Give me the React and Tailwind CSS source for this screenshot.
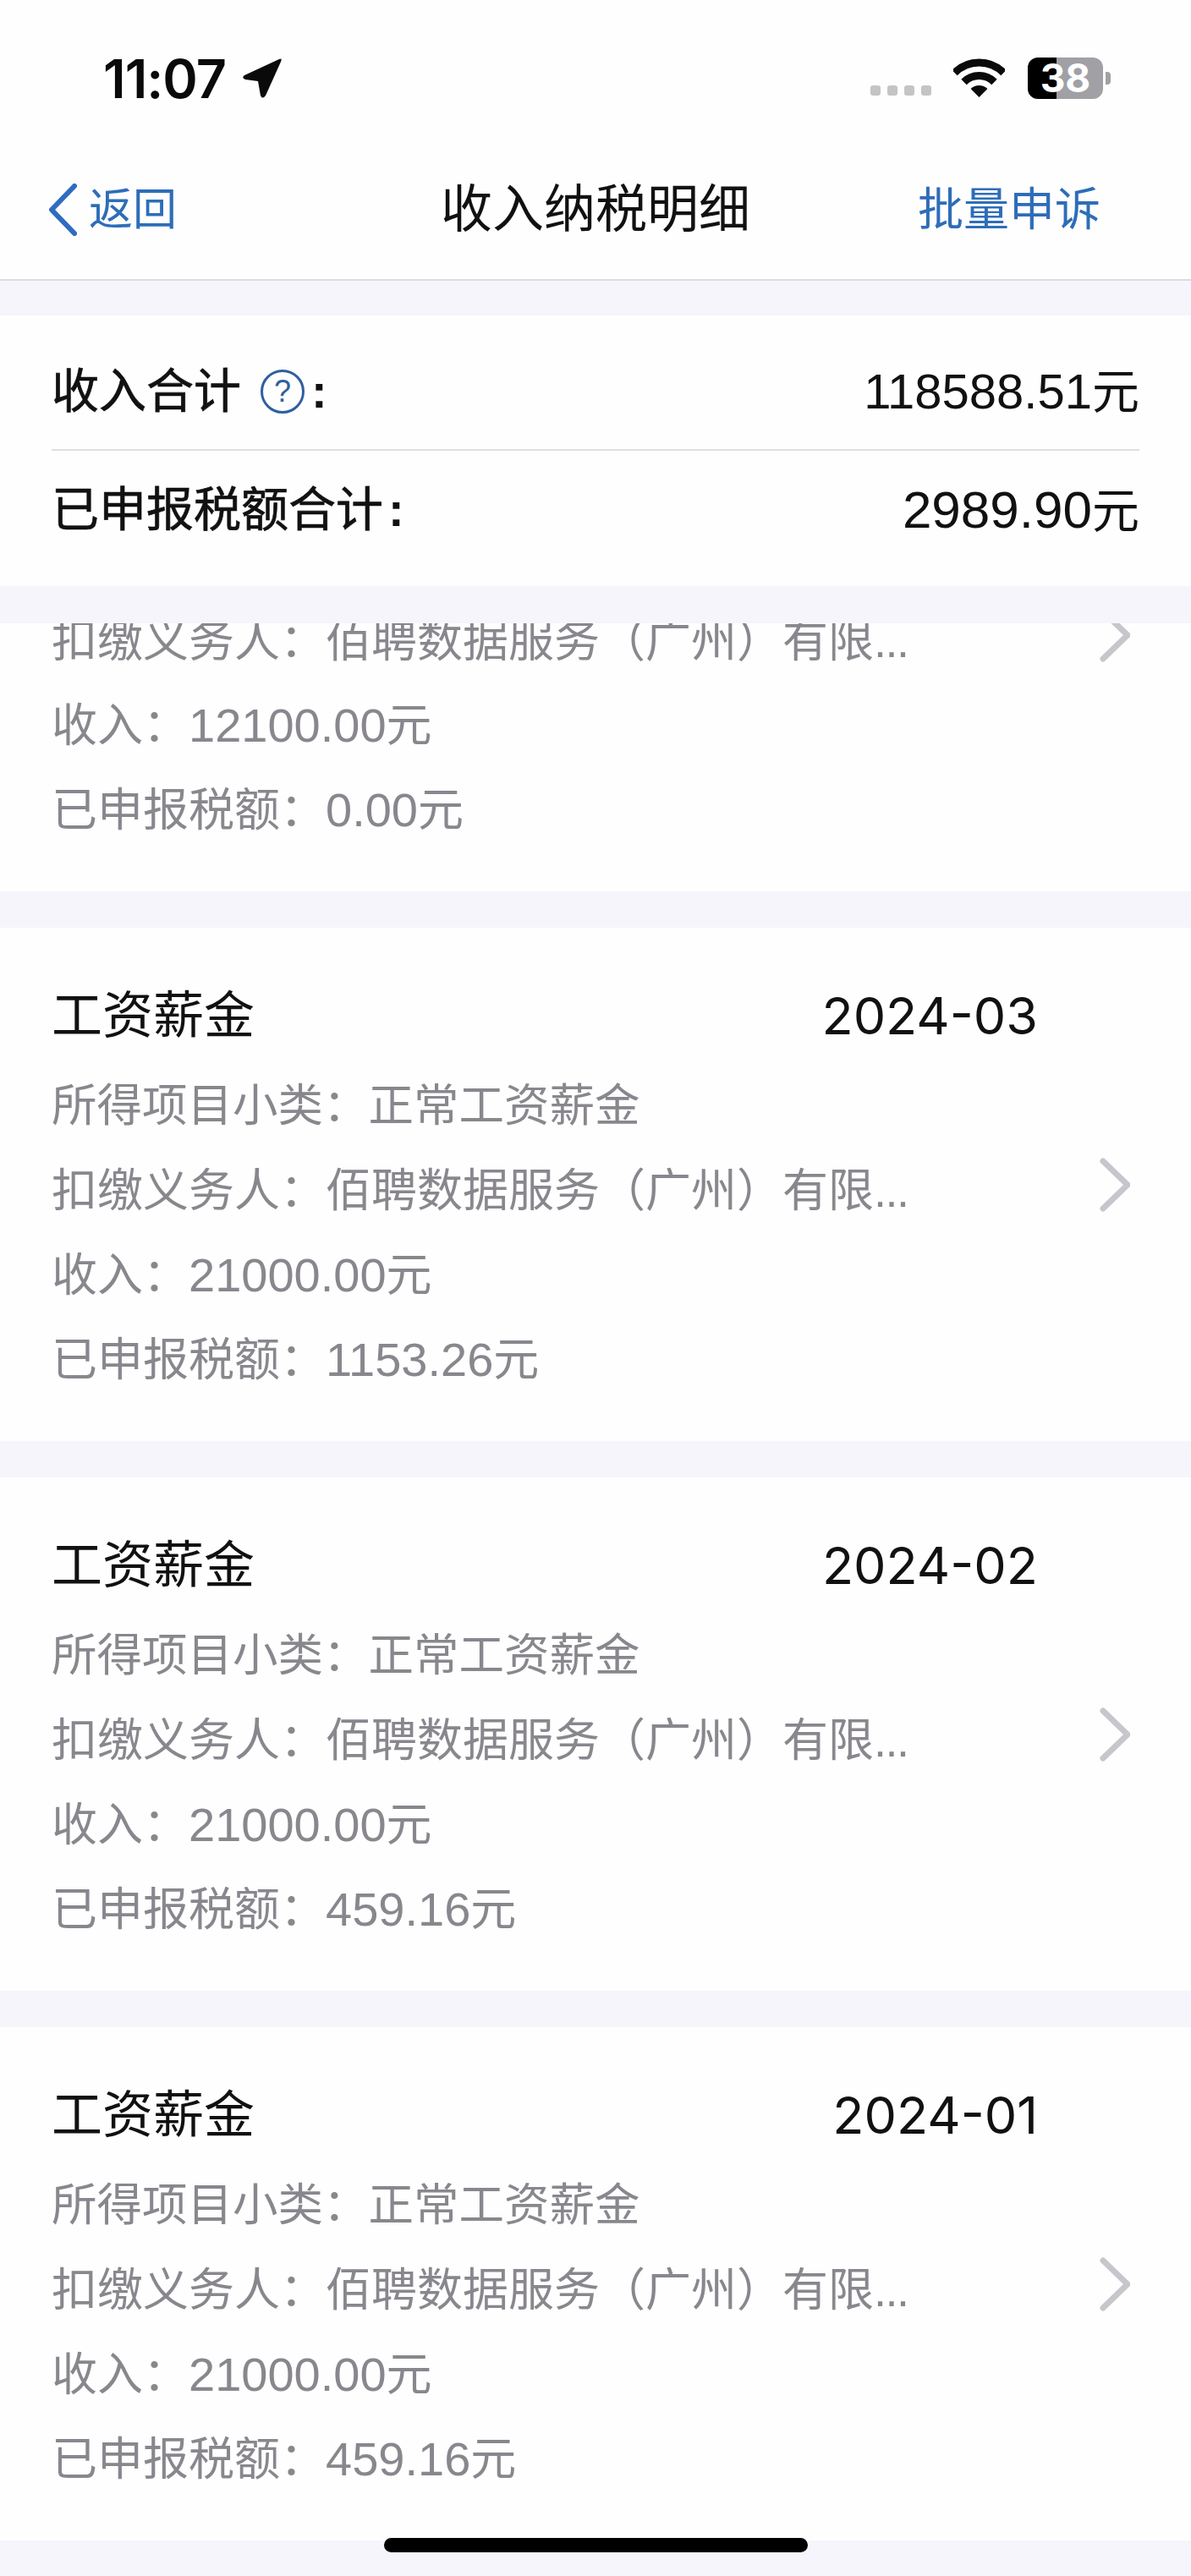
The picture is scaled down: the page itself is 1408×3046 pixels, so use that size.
const CARDS = [
  { date: '2024-04', income: '12100.00', tax: '0.00' },
  { date: '2024-03', income: '21000.00', tax: '1153.26' },
  { date: '2024-02', income: '21000.00', tax: '459.16' },
  { date: '2024-01', income: '21000.00', tax: '459.16' },
];

const StatusBar = () => (
  <div className="h-[184px] flex items-center justify-between pl-[122px] pr-[95px]">
    <div className="flex items-center gap-[18px] pt-[2px]">
      <span className="font-['Inter',sans-serif] text-[63px] leading-none font-semibold tracking-[-1px] text-[#0a0a0a]">11:07</span>
      <svg width="48" height="48" viewBox="0 0 48 48" className="-mt-[2px]">
        <path d="M45 2 4 21q-4 3 1 5l15 2 3 17q2 5 6 0L47 5q2-5-2-3z" fill="#0a0a0a" />
      </svg>
    </div>
    <div className="flex items-center">
      <div className="flex gap-[8px] mt-[30px] mr-[26px] ml-[2px]">
        <span className="w-[12px] h-[12px] rounded-[3px] bg-[#c4c4c4]" />
        <span className="w-[12px] h-[12px] rounded-[3px] bg-[#c4c4c4]" />
        <span className="w-[12px] h-[12px] rounded-[3px] bg-[#c4c4c4]" />
        <span className="w-[12px] h-[12px] rounded-[3px] bg-[#c4c4c4]" />
      </div>
      <svg width="61" height="46" viewBox="0 0 61 46" fill="none" stroke="#0a0a0a" strokeWidth="9" className="mr-[27px]">
        <path d="M1.5 17a41 41 0 0 1 58 0" />
        <path d="M12.5 28a25.500 25.500 0 0 1 36 0" />
        <path d="M30.500 46 20.600 36a14 14 0 0 1 19.800 0z" fill="#0a0a0a" stroke="none" />
      </svg>
      <div className="w-[89px] h-[49px] rounded-[12px] flex items-center justify-center bg-[linear-gradient(90deg,#000_38%,#a0a0a5_38%)] font-['Inter',sans-serif] text-[46px] leading-none font-bold text-white">
        38
      </div>
      <span className="w-[6px] h-[15px] ml-[3px] rounded-r-[4px] bg-[#a0a0a5]" />
    </div>
  </div>
);

const NavBar = () => (
  <div className="h-[128px] grid grid-cols-[1fr_auto_1fr] items-center px-[58px]">
    <div className="flex items-center gap-[14px]">
      <svg width="33" height="62" viewBox="0 0 33 62" fill="none" stroke="#2f6cc0" strokeWidth="6" strokeLinecap="round" strokeLinejoin="round">
        <path d="M30 3 3 31l27 28" />
      </svg>
      <span className="text-[52px] leading-none text-[#2e6db8]">返回</span>
    </div>
    <span className="text-[61px] leading-none text-[#111]">收入纳税明细</span>
    <span className="text-[54px] leading-none text-[#2e6db8] justify-self-end mr-[49px]">批量申诉</span>
  </div>
);

const Summary = () => (
  <div className="bg-[#fefefe] px-[61px] pt-[18px] pb-[24px] text-[56px] leading-none text-[#111]">
    <div className="h-[142px] pt-[4px] flex items-center justify-between border-b-2 border-[#dfdfe1]">
      <div className="flex items-center">
        <span className="[-webkit-text-stroke:0.7px_#111]">收入合计</span>
        <span className="w-[52px] h-[52px] ml-[23px] mr-[8px] rounded-full border-[3px] border-[#2f5f9f] flex items-center justify-center text-[36px] text-[#2f5f9f]">?</span>
        <span className="font-bold">:</span>
      </div>
      <span><span className="text-[58px]">118588.51</span>元</span>
    </div>
    <div className="h-[136px] pt-[4px] flex items-center justify-between">
      <div className="flex items-center gap-[6px]">
        <span className="[-webkit-text-stroke:0.7px_#111]">已申报税额合计</span>
        <span className="font-bold">:</span>
      </div>
      <span><span className="text-[62px]">2989.90</span>元</span>
    </div>
  </div>
);

const IncomeCard = ({ date, income, tax }) => (
  <div className="h-[607px] shrink-0 bg-[#fefefe] flex items-center pl-[61px] pr-[72px]">
    <div className="flex-1 pt-[8px]">
      <div className="h-[100px] mb-[6px] pr-[2px] flex items-center justify-between">
        <span className="text-[60px] leading-none text-[#111]">工资薪金</span>
        <span className="font-['Inter',sans-serif] text-[61px] leading-none text-[#111]">{date}</span>
      </div>
      <div className="text-[54px] leading-[100px] text-[#89878d]">
        <p className="text-[53.5px]">所得项目小类：正常工资薪金</p>
        <p>扣缴义务人：佰聘数据服务（广州）有限<span className="tracking-[-1.5px]">...</span></p>
        <p>收入：<span className="text-[56px]">{income}</span>元</p>
        <p>已申报税额：<span className="text-[56px]">{tax}</span>元</p>
      </div>
    </div>
    <svg width="36" height="64" viewBox="0 0 36 64" fill="none" stroke="#c6c6cc" strokeWidth="7" strokeLinecap="round" strokeLinejoin="round" className="ml-[71px] shrink-0">
      <path d="M4 4l29 28L4 60" />
    </svg>
  </div>
);

const App = () => (
  <div className="relative w-[1408px] h-[3046px] overflow-hidden bg-[#f6f5fc] font-['Liberation_Sans','Noto_Sans_CJK_SC',sans-serif]">
    <header className="h-[332px] bg-[#fefefe] border-b-2 border-[#dcdce2]">
      <StatusBar />
      <NavBar />
    </header>
    <div className="mt-[41px]">
      <Summary />
    </div>
    <div className="mt-[44px] h-[2309px] overflow-hidden">
      <div className="-mt-[290px] flex flex-col gap-[43px]">
        {CARDS.map((card) => (
          <IncomeCard key={card.date} {...card} />
        ))}
      </div>
    </div>
    <div className="absolute left-[454px] top-[3001px] w-[501px] h-[17px] rounded-full bg-black" />
  </div>
);

export default App;
